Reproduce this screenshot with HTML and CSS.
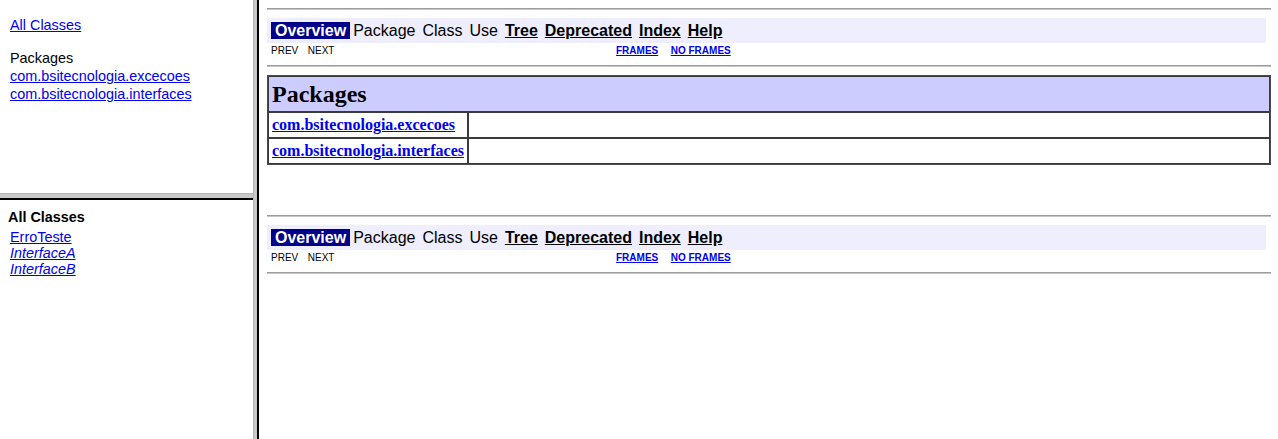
FILE: index.html
```html
<!DOCTYPE html>
<html lang="pt">
<head>
<meta charset="utf-8">
<title>Overview</title>
<link rel="stylesheet" href="styles.css">
</head>
<body>
<div class="frameset">
  <div class="left">
    <div class="pkg-pane">
      <a class="frame-item" href="#">All Classes</a>
      <div class="frame-heading">Packages</div>
      <a class="frame-item" href="#">com.bsitecnologia.excecoes</a>
      <a class="frame-item" href="#">com.bsitecnologia.interfaces</a>
    </div>
    <div class="hsplit"></div>
    <div class="cls-pane">
      <div class="cls-title">All Classes</div>
      <ul class="cls-list">
        <li><a href="#">ErroTeste</a></li>
        <li><a class="iface" href="#">InterfaceA</a></li>
        <li><a class="iface" href="#">InterfaceB</a></li>
      </ul>
    </div>
  </div>
  <div class="vsplit"></div>
  <div class="main">
    <hr class="rule rule-top">
    <div class="navbar">
      <div class="nav-first">
        <span class="nav-rev">Overview</span>
        <span class="nav-cell">Package</span>
        <span class="nav-cell">Class</span>
        <span class="nav-cell">Use</span>
        <a class="nav-cell nav-link" href="#">Tree</a>
        <a class="nav-cell nav-link" href="#">Deprecated</a>
        <a class="nav-cell nav-link" href="#">Index</a>
        <a class="nav-cell nav-link" href="#">Help</a>
      </div>
      <div class="nav-aside"></div>
      <div class="nav-sub nav-prevnext"><span>PREV</span><span class="nav-next">NEXT</span></div>
      <div class="nav-sub nav-frames"><a href="#">FRAMES</a><a class="noframes" href="#">NO FRAMES</a></div>
    </div>
    <hr class="rule">
    <table class="summary">
      <tr class="summary-head"><th colspan="2">Packages</th></tr>
      <tr><td class="pkg-name"><a href="#">com.bsitecnologia.excecoes</a></td><td>&nbsp;</td></tr>
      <tr><td class="pkg-name"><a href="#">com.bsitecnologia.interfaces</a></td><td>&nbsp;</td></tr>
    </table>
    <p class="spacer">&nbsp;</p>
    <hr class="rule">
    <div class="navbar">
      <div class="nav-first">
        <span class="nav-rev">Overview</span>
        <span class="nav-cell">Package</span>
        <span class="nav-cell">Class</span>
        <span class="nav-cell">Use</span>
        <a class="nav-cell nav-link" href="#">Tree</a>
        <a class="nav-cell nav-link" href="#">Deprecated</a>
        <a class="nav-cell nav-link" href="#">Index</a>
        <a class="nav-cell nav-link" href="#">Help</a>
      </div>
      <div class="nav-aside"></div>
      <div class="nav-sub nav-prevnext"><span>PREV</span><span class="nav-next">NEXT</span></div>
      <div class="nav-sub nav-frames"><a href="#">FRAMES</a><a class="noframes" href="#">NO FRAMES</a></div>
    </div>
    <hr class="rule">
  </div>
</div>
</body>
</html>
```

FILE: styles.css
```css
* { box-sizing: border-box; }
html, body { margin: 0; padding: 0; background: #fff; }
body { font-family: "Liberation Serif", serif; font-size: 16px; color: #000; }
a { color: #0000ee; }

.frameset {
  display: grid;
  grid-template-columns: 253px 6px 1fr;
  height: 439px;
  overflow: hidden;
}

.left {
  display: grid;
  grid-template-rows: 193px 7px 1fr;
  min-height: 0;
}

.pkg-pane {
  padding: 16px 0 0 10px;
  font-family: "Liberation Sans", Arial, sans-serif;
  font-size: 14.4px;
  line-height: 18px;
  display: flex;
  flex-direction: column;
  align-items: flex-start;
}
.frame-heading { margin-top: 15px; color: #000; }

.hsplit {
  background: #c9c9c9;
  border-top: 1px solid #b5b5b5;
  border-bottom: 2px solid #000;
}

.vsplit {
  background: #c9c9c9;
  border-left: 1px solid #b5b5b5;
  border-right: 2px solid #000;
}

.cls-pane {
  padding: 8px 0 0 8px;
  font-family: "Liberation Sans", Arial, sans-serif;
  font-size: 14.4px;
}
.cls-title { font-weight: bold; line-height: 18px; }
.cls-list {
  list-style: none;
  margin: 3px 0 0;
  padding: 0 0 0 2px;
  line-height: 16px;
}
.iface { font-style: italic; }

.main {
  padding: 0 7px 0 8px;
  min-width: 0;
}

.rule {
  height: 0;
  margin: 8px 0;
  border: 0;
  border-top: 1px solid #9c9c9c;
  border-bottom: 1px solid #c6c6c6;
}

.navbar {
  display: grid;
  grid-template-columns: 348px 1fr 5px;
  font-family: "Liberation Sans", Arial, sans-serif;
}
.nav-first {
  grid-column: 1 / 3;
  background: #eeeeff;
  padding: 4px 4px;
  display: flex;
  gap: 3px;
  font-size: 16px;
  line-height: 17px;
}
.nav-aside { grid-column: 3; grid-row: 1 / 3; }
.nav-rev {
  background: #00008b;
  color: #fff;
  font-weight: bold;
  padding: 0 4px;
}
.nav-cell { padding-right: 4px; color: #000; }
.nav-link { font-weight: bold; color: #000; text-decoration: underline; }

.nav-sub {
  font-size: 10px;
  line-height: 12px;
  padding: 2px 1px 0;
}
.nav-prevnext { padding-left: 4px; }
.nav-next { margin-left: 9.5px; }
.nav-frames a { font-weight: bold; color: #0000ee; }
.nav-frames .noframes { margin-left: 12.5px; }

.summary {
  width: 100%;
  border-collapse: separate;
  border-spacing: 0;
  border: 1px solid #4a4a4a;
}
.summary th,
.summary td {
  border: 1px solid #3a3a3a;
  padding: 3px;
}
.summary-head th {
  background: #ccccff;
  text-align: left;
  font-size: 24px;
  line-height: 28px;
  font-weight: bold;
}
.summary td { line-height: 18px; font-size: 16px; }
.pkg-name { width: 20%; font-weight: bold; white-space: nowrap; }

.spacer { margin: 16px 0; line-height: 18px; }
```
